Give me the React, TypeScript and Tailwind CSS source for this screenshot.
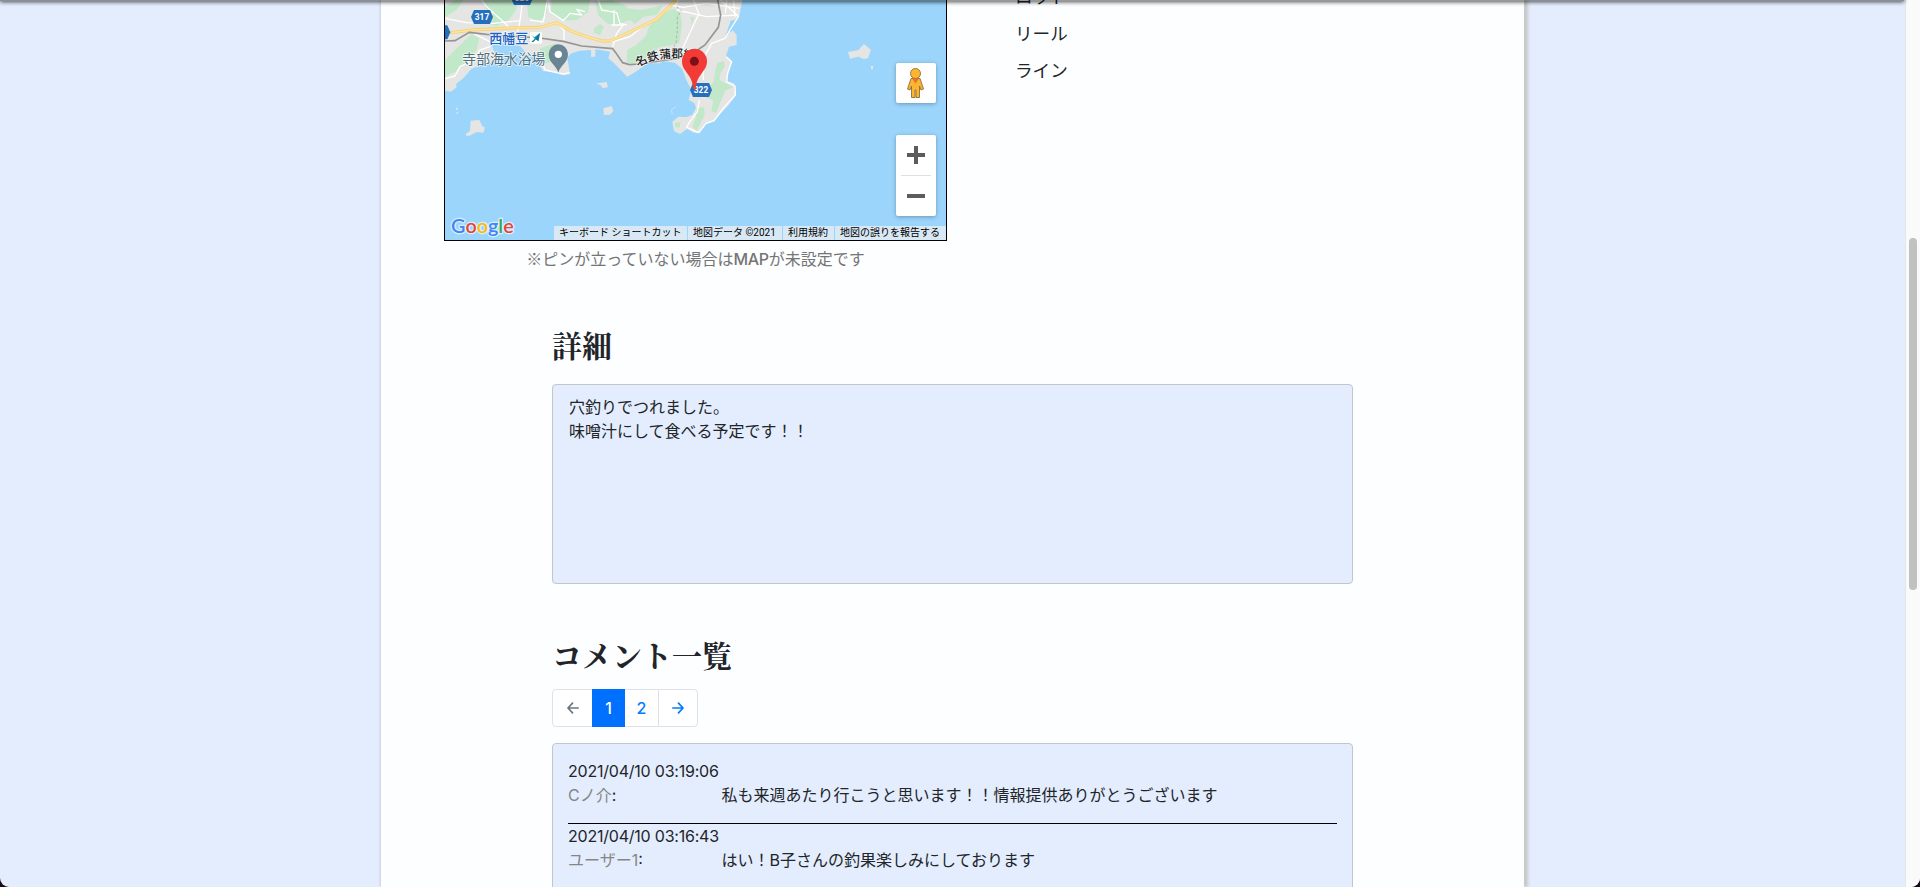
const JP = "font-['Inter','Noto_Sans_CJK_JP',sans-serif]";

const comments = [
  { date: "2021/04/10 03:19:06", name: "Cノ介", text: "私も来週あたり行こうと思います！！情報提供ありがとうございます" },
  { date: "2021/04/10 03:16:43", name: "ユーザー1", text: "はい！B子さんの釣果楽しみにしております" },
];

function RouteShield({ x, y, label }: { x: number; y: number; label: string }) {
  return (
    <g transform={`translate(${x} ${y})`}>
      <path d="M-24 -21H24L33 0L24 21H-24L-33 0Z" fill="#266fbd" />
      <text y="9" textAnchor="middle" fontSize="25" fontWeight="700" fill="#fff">{label}</text>
    </g>
  );
}

function MapDrawing() {
  return (
    <svg viewBox="45 0 1503 720" className="block h-[240px] w-[501px] font-['Roboto','Noto_Sans_CJK_JP',sans-serif]">
      <rect x="45" width="1503" height="720" fill="#9bd5fc" />
      <path
        fill="#e5e5e4"
        d="M45 0H937L928 48L914 60L902 62L900 80L920 105L920 135L897 140L888 168L906 184L894 215L890 244L912 250L918 285L896 315L868 345L850 365L828 372L808 400L790 398L772 386L750 402L732 394L727 365L745 350L768 352L786 345L798 325L794 310L776 300L784 270L768 238L756 206L735 188L700 184L690 190L652 190L622 212L592 230L575 213L552 190L535 175L540 155L496 148V170H483V150L450 152L425 160L412 172L420 222L400 226L372 214L340 214L330 198L350 178L345 160L290 165L278 150L258 142L225 148L205 160L180 190L152 196L124 207L100 235L78 252L80 262L62 275L45 272Z"
      />
      <g fill="#e5e5e4">
        <path d="M122 362L148 360L158 380H164V386L160 398L140 396L118 407H108V401L120 392Z" />
        <path d="M520 325L545 318L550 333L540 344L522 345Z" />
        <path d="M498 250L515 248L530 246L534 262L518 264L512 256Z" />
        <path d="M1254 156L1285 150L1302 132L1323 150L1314 175L1300 177L1285 170L1260 176Z" />
        <path d="M1323 198H1329V208H1323Z" />
        <path d="M78 323H83V329H78ZM80 336H84V341H80Z" />
      </g>
      <g fill="#c1e8c8">
        <path d="M160 0H262L258 30L235 62L200 78L170 68L190 40L168 28Z" />
        <path d="M290 0H352L350 40L325 68L295 50Z" />
        <path d="M365 0H480L475 35L440 60L395 62L362 40Z" />
        <path d="M495 5L545 0L590 18L600 60L560 75L530 70L505 45Z" />
        <path d="M590 25L635 30L700 15L680 45L640 50L615 72L590 50Z" />
        <path d="M658 78L690 48L725 28L748 30L756 70L748 130L715 138L690 140L665 162L630 190L590 188L592 150L620 134L648 108Z" />
        <path d="M45 180L85 140L125 102L148 115L140 150L110 185L75 215L45 230Z" />
        <path d="M45 20L75 0H100L80 30L45 50Z" />
        <path d="M492 85L510 72L522 80L510 105L492 98ZM782 50L792 52L785 75Z" />
        <path d="M330 145L380 130L390 165L370 185L340 190Z" />
        <path d="M862 188L882 184L884 200L872 218L868 240L910 262L885 272L874 300L858 338L844 335L850 300L824 290L826 270L850 248L856 210Z" />
        <path d="M800 325L822 322L824 345L800 392L787 380L798 350ZM735 368L752 366L748 384L735 380Z" />
      </g>
      <path d="M182 120L215 130L270 138L290 160L270 168L240 160L205 172L190 150Z" fill="#9bd5fc" />
      <path d="M902 62L918 66L914 88L896 100L882 120L892 92Z" fill="#9bd5fc" />
      <g fill="none" stroke="#fff" strokeWidth="4" strokeLinejoin="round">
        <path d="M45 55L110 68L190 70L270 62L262 100M270 62L278 0M300 60L340 66L352 0M355 0L360 35L400 62L420 40L455 45L440 28L465 35M380 65L402 92L402 120M505 0L515 30L560 38L570 70L590 75" />
        <path d="M545 75L580 75L560 100L548 142M552 30V75M155 0L170 20L220 65L240 85M45 236L75 228L90 200L130 180L150 150L180 140M130 100L190 130" />
        <path d="M720 15L760 22L830 10L928 25M735 20L745 0M740 30L830 50L925 45M805 45L760 140L750 160M870 0L905 30L925 50L900 90L885 115L845 130L818 180L820 240" />
        <path d="M888 170L905 185L893 220L890 245L915 258L916 285L882 322L852 362L828 370L806 398L770 382L776 370L802 335L808 300" />
        <path d="M340 195L345 210L400 222L420 218M790 0L808 45M890 0L886 40M910 0L916 50M545 126L600 110L645 74" />
      </g>
      <path d="M727 343L724 330L738 320" fill="none" stroke="#e5e5e4" strokeWidth="2" />
      <path d="M45 100L130 90L240 84L330 82L380 68L425 94L470 110L515 123L540 123L600 96L680 58L738 0" fill="none" stroke="#f4cf69" strokeWidth="9" />
      <path d="M45 100L130 90L240 84L330 82L380 68L425 94L470 110L515 123L540 123L600 96L680 58L738 0" fill="none" stroke="#ffe49b" strokeWidth="5" />
      <path d="M45 123L75 122L118 97L170 103L330 114L400 124L455 138L548 146L560 162L578 188L598 194L630 192L740 175L795 155L825 135L865 82L872 45L863 0" fill="none" stroke="#959595" strokeWidth="5" />
      <path d="M740 20L755 32L742 50V90L738 130L725 150" fill="none" stroke="#999" strokeWidth="2" strokeDasharray="8 6" />
      <RouteShield x={156} y={51} label="317" />
      <RouteShield x={276} y={-6} label="320" />
      <RouteShield x={28} y={97} label="7" />
      <RouteShield x={813} y={270} label="322" />
      <g stroke="#fff" strokeOpacity=".75" strokeWidth="5" strokeLinejoin="round" paintOrder="stroke">
        <text x="178" y="128" fontSize="39" fontWeight="500" fill="#1762c4">西幡豆</text>
        <text x="97" y="192" fontSize="41.5" fontWeight="400" fill="#4f6f7f">寺部海水浴場</text>
        <path id="railLabel" d="M624 202Q690 160 810 180" fill="none" stroke="none" />
        <text fontSize="35" fontWeight="500" fill="#222"><textPath href="#railLabel">名鉄蒲郡線</textPath></text>
      </g>
      <rect x="300" y="97" width="36" height="34" rx="4" fill="#fff" />
      <path d="M304 104L313 112L330 99L326 124L318 118L310 127L304 125L314 116Z" fill="#159a87" />
      <path d="M309 126L330 99L323 122L316 116Z" fill="#1762c4" />
      <path d="M385 219C382 198 356 190 356 162A29 29 0 0 1 414 162C414 190 388 198 385 219Z" fill="#698492" />
      <circle cx="385" cy="163" r="11" fill="#fff" />
      <path d="M794 270Q790 270 789 260C785 222 756 214 756 184A37.500 37.500 0 0 1 831 184C831 214 802 222 798 260Q797 270 794 270Z" fill="#f23b37" />
      <circle cx="793" cy="184" r="13.500" fill="#7b1114" />
      <text x="63" y="699" fontSize="60" fontWeight="600" textLength="188" lengthAdjust="spacingAndGlyphs" stroke="#fff" strokeOpacity=".6" strokeWidth="8" strokeLinejoin="round" paintOrder="stroke" className="font-['Lato',sans-serif]">
        <tspan fill="#4285f4">G</tspan><tspan fill="#ea4335">o</tspan><tspan fill="#fbbc05">o</tspan><tspan fill="#4285f4">g</tspan><tspan fill="#34a853">l</tspan><tspan fill="#ea4335">e</tspan>
      </text>
    </svg>
  );
}

function Pegman() {
  return (
    <svg viewBox="0 0 20 32" className="h-8 w-5">
      <g fill="#fdb52f" stroke="#8a6d3b" strokeWidth=".9" strokeLinejoin="round">
        <path d="M5 11.500H14L17.500 22L15 23L13.500 19V30.500H10V23H9V30.500H5.500V19L4 23L1.500 22Z" />
        <circle cx="9.500" cy="6.500" r="5" />
      </g>
      <path d="M6 11.500H13L9.500 16.500Z" fill="#e8703a" />
    </svg>
  );
}

function GoogleMap() {
  return (
    <div className="relative h-[241px] w-[503px] border border-t-0 border-black">
      <MapDrawing />
      <div className="absolute top-[63px] right-[10px] flex flex-col gap-8">
        <div className="flex size-10 items-center justify-center rounded-xs bg-white shadow-[0_1px_4px_rgba(0,0,0,0.3)]"><Pegman /></div>
        <div className="flex h-[81px] w-10 flex-col items-center rounded-xs bg-white shadow-[0_1px_4px_rgba(0,0,0,0.3)]">
          <svg viewBox="0 0 40 40" className="size-10" fill="#5c5c5c"><path d="M11 18H18V11H22V18H29V22H22V29H18V22H11Z" /></svg>
          <div className="h-px w-[30px] bg-[#e0e0e0]" />
          <svg viewBox="0 0 40 40" className="size-10" fill="#5c5c5c"><path d="M11 18H29V22H11Z" /></svg>
        </div>
      </div>
      <div className="absolute right-0 bottom-0 flex h-[14px] gap-px text-[10px] leading-[13px] whitespace-nowrap text-black font-['Roboto','Noto_Sans_CJK_JP',sans-serif]">
        <span className="w-[133px] bg-[#d8e9f5] pl-[5px]">キーボード ショートカット</span>
        <span className="w-[94px] bg-[#d8e9f5] pl-[5px]">地図データ ©2021</span>
        <span className="w-[51px] bg-[#d8e9f5] pl-[5px]">利用規約</span>
        <span className="w-[111px] bg-[#d8e9f5] pl-[5px]">地図の誤りを報告する</span>
      </div>
    </div>
  );
}

function Arrow({ flip }: { flip?: boolean }) {
  return (
    <svg viewBox="0 0 12 12" className={flip ? "w-3 -scale-x-100" : "w-3"} fill="none" stroke="currentColor" strokeWidth="1.700" strokeLinecap="round" strokeLinejoin="round">
      <path d="M.8 6H11M6.500 1.200L11 6L6.500 10.800" />
    </svg>
  );
}

function SectionHeading({ children }: { children: string }) {
  return (
    <h2 className="pb-1 text-[30px] leading-8 font-bold font-['Noto_Serif_CJK_JP','Noto_Sans_CJK_JP',serif]">{children}</h2>
  );
}

export default function App() {
  return (
    <div className="h-[887px] overflow-hidden bg-[#170b18]">
      <div className={`relative flex h-full overflow-hidden rounded-b-[9px] bg-[#e4edfd] text-base leading-6 text-[#212529] ${JP}`}>
        <div className="flex h-full w-[1905px] shrink-0 pl-[381px]">
          <main className="h-full w-[1143px] bg-[#fdfeff] shadow-[4px_0_3px_#c8c8c8,-1px_0_2px_rgba(0,0,0,0.12)]">
            <div className="flex h-[275px]">
              <section className="ml-[63px] w-[503px]">
                <GoogleMap />
                <p className="mt-[6px] text-center text-[#757575]"><span className="leading-5 font-['Noto_Sans_CJK_JP']">※</span>ピンが立っていない場合は<span className="font-medium tracking-[-0.3px]">MAP</span>が未設定です</p>
              </section>
              <ul className="-mt-[22px] ml-[68px] text-[17.600px] leading-[37px]">
                <li>ロッド</li>
                <li>リール</li>
                <li>ライン</li>
              </ul>
            </div>
            <section className="ml-[171px] w-[801px] pt-[53px]">
              <SectionHeading>詳細</SectionHeading>
              <div className="mt-5 mb-[54px] h-[200px] rounded-[4px] border border-[#c3c5cb] bg-[#e4edfd] px-4 py-[10px]">
                穴釣りでつれました。<br />味噌汁にして食べる予定です！！
              </div>
              <SectionHeading>コメント一覧</SectionHeading>
              <nav className="mt-[15px] flex h-[38px] w-[146px] items-stretch rounded-[4px] border border-[#dee2e6] bg-white font-medium text-[#007bff]">
                <span className="flex w-[39px] items-center justify-center text-[#6c757d]"><Arrow flip /></span>
                <span className="-my-px flex w-[33px] items-center justify-center bg-[#0070ff] text-white">1</span>
                <span className="flex w-[34px] items-center justify-center border-r border-[#dee2e6]">2</span>
                <span className="flex flex-1 items-center justify-center"><Arrow /></span>
              </nav>
              <div className="mt-4 h-[200px] rounded-[4px] border border-[#c3c5cb] bg-[#e4edfd] px-[15px] pt-[15px]">
                {comments.map((c) => (
                  <article key={c.date} className="h-[65px] border-b border-black [&:last-child]:border-0">
                    <div className="tracking-[-0.22px]">{c.date}</div>
                    <div className="flex">
                      <div className="w-[153.500px]"><span className="text-[#868686]">{c.name}</span>:</div>
                      <div>{c.text}</div>
                    </div>
                  </article>
                ))}
              </div>
            </section>
          </main>
        </div>
        <div className="flex w-[15px] shrink-0 justify-center border-l border-[#e6e6e6] bg-[#fafafa] pt-[238px]">
          <div className="h-[352px] w-2 rounded-full bg-[#c1c1c1]" />
        </div>
        <div className="absolute top-[-4px] left-0 h-[5px] w-[1904px] bg-black/40 shadow-[0_1px_4px_rgba(0,0,0,0.7)]" />
      </div>
    </div>
  );
}
